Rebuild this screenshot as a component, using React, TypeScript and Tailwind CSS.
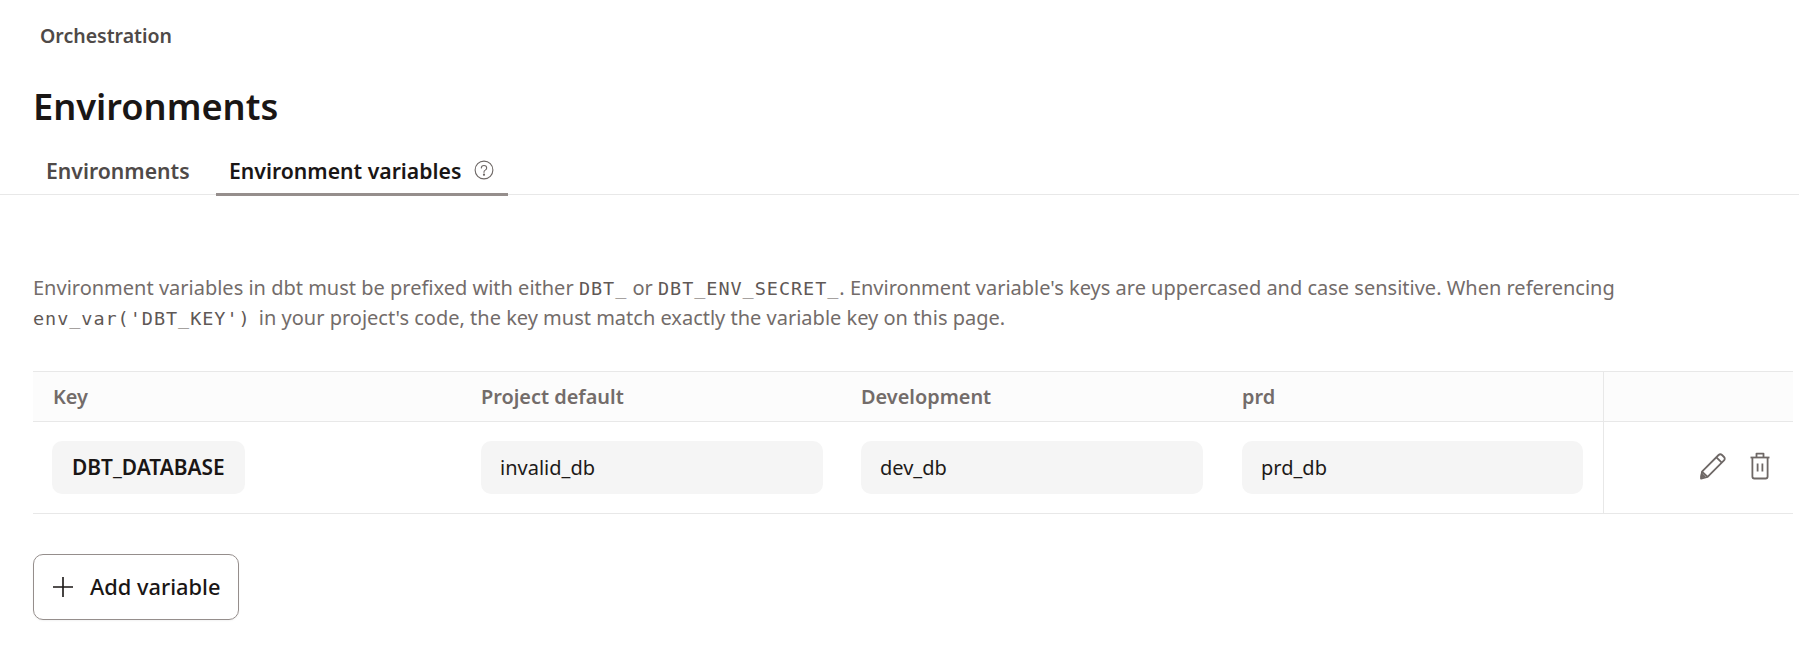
const sans = "font-['Noto_Sans',sans-serif]";
const mono = "font-['DejaVu_Sans_Mono',monospace] text-[18.5px] tracking-[0.95px] leading-none text-[#5f5856]";

function HelpIcon() {
  return (
    <svg width="20" height="20" viewBox="0 0 18 18" fill="none" stroke="#6e6866" strokeWidth="1" className="ml-[13px] mt-[-2px]">
      <circle cx="9" cy="9" r="8" />
      <path d="M6.6 7.2c0-1.4 1.1-2.3 2.4-2.3s2.4.9 2.4 2.2c0 1-.6 1.5-1.3 2-.7.4-1.1.8-1.1 1.6v.4" strokeLinecap="round" />
      <circle cx="9" cy="13.2" r="0.5" fill="#6e6866" />
    </svg>
  );
}

function PencilIcon() {
  return (
    <svg width="28" height="28" viewBox="0 0 28 28" fill="none" stroke="#6e6866" strokeWidth="1.8" strokeLinejoin="round">
      <path d="M2 26.6l1-7L19.6 3c1-1 2.4-1 3.4 0l2 2c1 1 1 2.4 0 3.4L8.6 24.9z" />
      <path d="M17.4 5.3l5.4 5.4" />
      <path d="M3 19.6l5.6 5.3" />
      <path d="M2.2 25l.6-3 2.6 2.5z" fill="#6e6866" />
    </svg>
  );
}

function TrashIcon() {
  return (
    <svg width="20" height="28" viewBox="0 0 20 28" fill="none" stroke="#6e6866" strokeWidth="1.8" strokeLinejoin="round">
      <path d="M0.5 5.5h19" />
      <path d="M6.5 5V1.6h7V5" />
      <path d="M2.4 6v18.5c0 1.2.8 2 2 2h11.2c1.2 0 2-.8 2-2V6" />
      <path d="M7.6 11.5v8M12.4 11.5v8" />
    </svg>
  );
}

function ValuePill({ value }: { value: string }) {
  return (
    <div className="h-[53px] rounded-[10px] bg-[#f5f5f5] pl-[19px] flex items-center text-[20px] text-[#1d1a19]">
      {value}
    </div>
  );
}

export default function App() {
  return (
    <div className={`${sans} w-[1799px] h-[669px] bg-white overflow-hidden`}>
      <div className="pt-[22px] pl-[40px] text-[19.5px] leading-[28px] font-semibold text-[#4f4a48]">Orchestration</div>

      <h1 className="mt-[31px] pl-[33px] text-[36.2px] leading-[50px] font-semibold text-[#1a1615]">Environments</h1>

      {/* Tabs */}
      <div className="mt-[14px] h-[50px] flex items-start border-b border-[#e8e8e8] pl-[33px]">
        <div className="h-[50px] w-[183px] pl-[13px] pt-[2px] flex items-center text-[21.2px] font-semibold text-[#4f4a48]">Environments</div>
        <div className="h-[51px] w-[292px] pl-[13px] pt-[3px] flex items-center text-[21.2px] font-semibold text-[#1a1615] border-b-[3px] border-[#958e8c]">
          Environment variables
          <HelpIcon />
        </div>
      </div>

      {/* Description */}
      <p className="mt-[78px] pl-[33px] text-[20px] leading-[30px] text-[#736c6a]">
        Environment variables in dbt must be prefixed with either{' '}
        <code className={mono}>DBT_</code> or{' '}
        <code className={mono}>DBT_ENV_SECRET_</code>. Environment variable's keys are uppercased and case sensitive. When referencing
        <br />
        <code className={`${mono} mr-[3px]`}>env_var('DBT_KEY')</code> in your project's code, the key must match exactly the variable key on this page.
      </p>

      {/* Table */}
      <div className="mt-[38px] ml-[33px] w-[1760px] grid grid-cols-[428px_380px_381px_381px_190px] border-y border-[#e8e8e8] text-[19.9px]">
        <div className="h-[50px] bg-[#fcfcfc] border-b border-[#e8e8e8] pl-[20px] flex items-center font-semibold text-[#736c6a]">Key</div>
        <div className="h-[50px] bg-[#fcfcfc] border-b border-[#e8e8e8] pl-[20px] flex items-center font-semibold text-[#736c6a]">Project default</div>
        <div className="h-[50px] bg-[#fcfcfc] border-b border-[#e8e8e8] pl-[20px] flex items-center font-semibold text-[#736c6a]">Development</div>
        <div className="h-[50px] bg-[#fcfcfc] border-b border-[#e8e8e8] pl-[20px] flex items-center font-semibold text-[#736c6a]">prd</div>
        <div className="h-[50px] bg-[#fcfcfc] border-b border-l border-[#e8e8e8]" />

        <div className="h-[91px] pl-[19px] pt-[19px]">
          <div className="w-[193px] h-[53px] rounded-[10px] bg-[#f5f5f5] pl-[20px] flex items-center font-semibold text-[20.9px] text-[#1a1615]">DBT_DATABASE</div>
        </div>
        <div className="h-[91px] pl-[20px] pr-[18px] pt-[19px]"><ValuePill value="invalid_db" /></div>
        <div className="h-[91px] pl-[20px] pr-[19px] pt-[19px]"><ValuePill value="dev_db" /></div>
        <div className="h-[91px] pl-[20px] pr-[20px] pt-[19px]"><ValuePill value="prd_db" /></div>
        <div className="h-[91px] border-l border-[#e8e8e8] flex items-center justify-end gap-[23px] pr-[23px] pb-[4px]">
          <PencilIcon />
          <TrashIcon />
        </div>
      </div>

      <button className="mt-[40px] ml-[33px] w-[206px] h-[66px] rounded-[10px] border border-[#958e8c] flex items-center pl-[19px] shadow-[0_1px_2px_rgba(0,0,0,0.05)] text-[21.8px] font-medium text-[#1a1615]">
        <svg width="20" height="20" viewBox="0 0 20 20" stroke="#1a1615" strokeWidth="1.6" fill="none">
          <path d="M10 0v20M0 10h20" />
        </svg>
        <span className="ml-[17px] pt-[1px]">Add variable</span>
      </button>
    </div>
  );
}
